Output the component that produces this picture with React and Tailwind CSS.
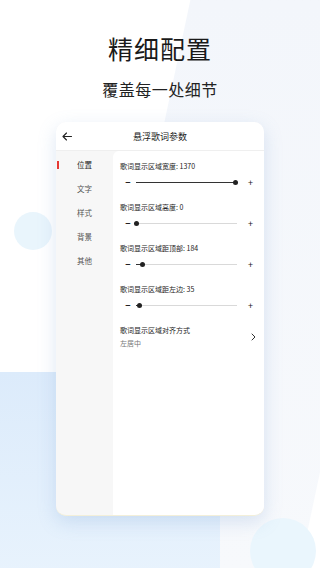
import React from 'react';

const font = { fontFamily: '"Noto Sans CJK SC", "Noto Sans", sans-serif' };

const sliders = [
  { label: '歌词显示区域宽度: 1370', pct: 99 },
  { label: '歌词显示区域高度: 0', pct: 0 },
  { label: '歌词显示区域距顶部: 184', pct: 6 },
  { label: '歌词显示区域距左边: 35', pct: 3 },
];

const tabs = ['位置', '文字', '样式', '背景', '其他'];

const Slider = ({ label, pct }) => (
  <div className="flex flex-col">
    <div className="text-[7px] leading-[10px] text-[#222]">{label}</div>
    <div className="flex items-center h-[12px] mt-[5px]">
      <span className="w-[16px] text-center text-[9px] leading-none text-[#222] font-bold">−</span>
      <div className="relative w-[101px] h-[1px] bg-[#d9d9d9]">
        <div className="absolute left-0 top-0 h-[1px] bg-[#333]" style={{ width: pct + '%' }} />
        <div
          className="absolute top-[-2px] w-[5px] h-[5px] -ml-[2.5px] rounded-full bg-[#222]"
          style={{ left: pct + '%' }}
        />
      </div>
      <span className="ml-[11px] text-[9px] leading-none text-[#222]">+</span>
    </div>
  </div>
);

const App = () => {
  return (
    <div className="relative w-[320px] h-[568px] overflow-hidden bg-white" style={font}>
      {/* background decoration */}
      <div className="absolute top-0 right-[-40px] w-[230px] h-[568px] bg-gradient-to-b from-[#f3f6fb] to-[#f7f9fc] skew-x-[-12deg]" />
      <div className="absolute left-[-40px] top-[372px] w-[260px] h-[240px] rounded-[40px] bg-gradient-to-b from-[#dcebfb] to-[#eaf4fd]" />
      <div className="absolute left-[14px] top-[212px] w-[38px] h-[38px] rounded-full bg-[#e9f5fc]" />
      <div className="absolute left-[250px] top-[518px] w-[66px] h-[66px] rounded-full bg-[#eaf6fd]" />

      <div className="relative flex flex-col items-center">
        <h1 className="mt-[32px] text-[25px] leading-[32px] font-normal text-[#1a1a1a] tracking-[1px]">精细配置</h1>
        <p className="mt-[15px] text-[16px] leading-[20px] text-[#222] tracking-[0.5px]">覆盖每一处细节</p>

        <div className="mt-[23px] w-[208px] h-[394px] rounded-[10px] bg-[#f7f7f7] overflow-hidden flex flex-col shadow-[0_6px_18px_rgba(120,160,210,0.25)] border-b border-[#f3efd9]">
          <div className="relative h-[29px] bg-white flex items-center justify-center border-b border-[#efefef]">
            <svg className="absolute left-[6px] top-[10px]" width="10" height="9" viewBox="0 0 10 9" fill="none">
              <path d="M9.5 4.5H1M4.5 1L1 4.5L4.5 8" stroke="#222" strokeWidth="1.1" strokeLinecap="round" strokeLinejoin="round" />
            </svg>
            <span className="text-[9px] leading-none text-[#222]">悬浮歌词参数</span>
          </div>
          <div className="flex flex-1">
            <div className="w-[57px] flex flex-col items-center pt-[2px]">
              {tabs.map((t, i) => (
                <div key={t} className="relative w-full h-[24px] flex items-center justify-center">
                  {i === 0 && <div className="absolute left-[1px] top-[8px] w-[2px] h-[8px] bg-[#e53935]" />}
                  <span className={'text-[7.5px] leading-none ' + (i === 0 ? 'text-[#222]' : 'text-[#555]')}>{t}</span>
                </div>
              ))}
            </div>
            <div className="flex-1 bg-white rounded-tl-[6px] pl-[7px] pr-[6px] pt-[10px] flex flex-col gap-[14px]">
              {sliders.map((s) => (
                <Slider key={s.label} {...s} />
              ))}
              <div className="flex items-center justify-between">
                <div className="flex flex-col">
                  <span className="text-[7px] leading-[10px] text-[#222]">歌词显示区域对齐方式</span>
                  <span className="mt-[3px] text-[7px] leading-[10px] text-[#777]">左居中</span>
                </div>
                <svg width="5" height="8" viewBox="0 0 5 8" fill="none" className="mr-[2px]">
                  <path d="M1 1L4 4L1 7" stroke="#333" strokeWidth="1" strokeLinecap="round" strokeLinejoin="round" />
                </svg>
              </div>
            </div>
          </div>
        </div>
      </div>
    </div>
  );
};

export default App;
